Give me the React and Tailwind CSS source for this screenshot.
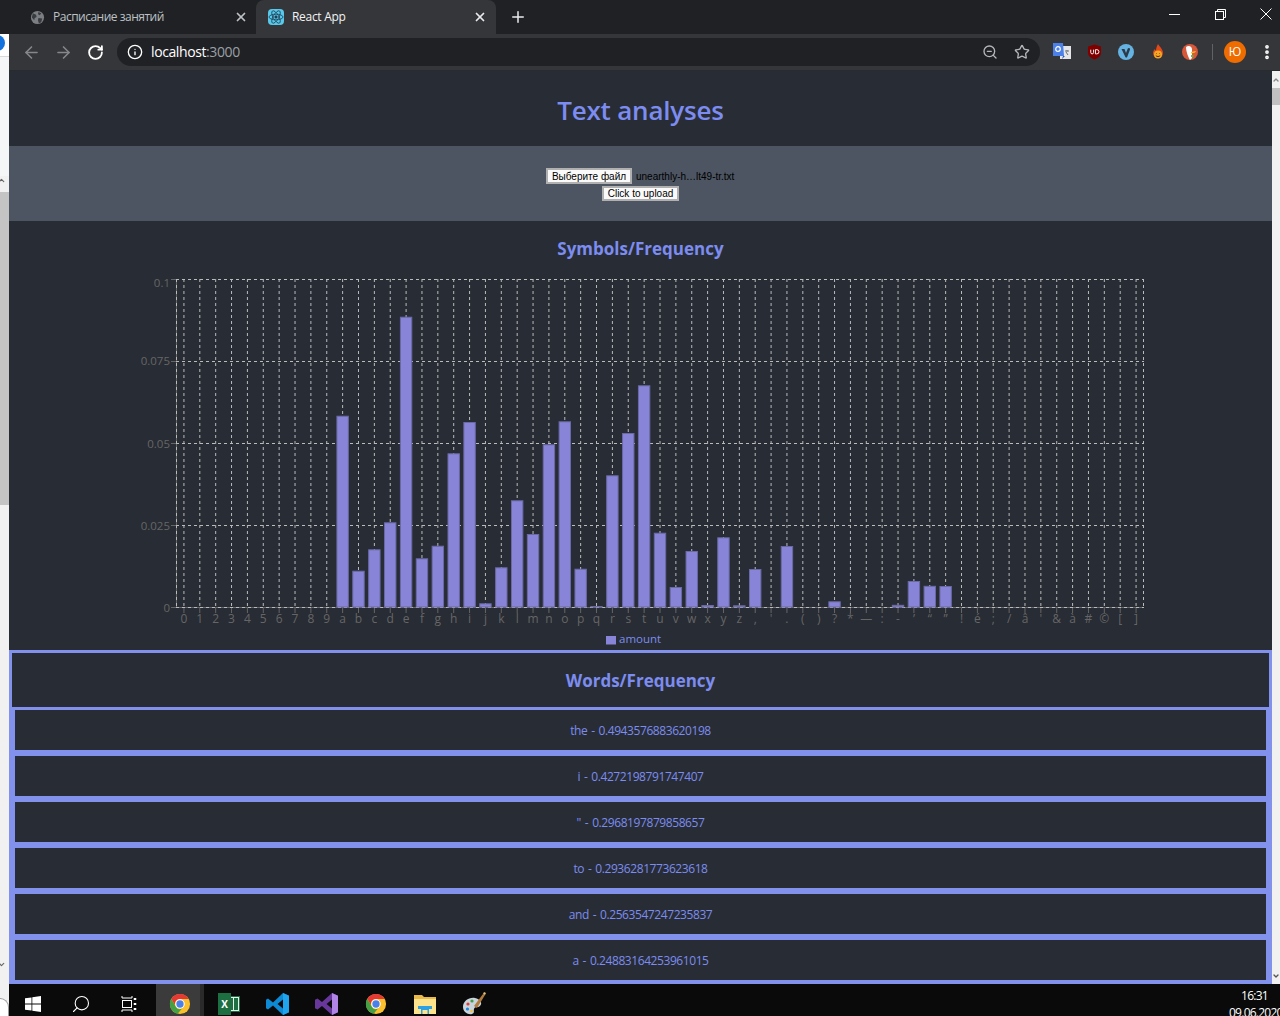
import React from "react";
import { ArrowLeft, ArrowRight, RotateCw, Info, ZoomOut, Star, X, Plus, EllipsisVertical, Search, ChevronUp, ChevronDown } from "lucide-react";

const ticks = ["0","1","2","3","4","5","6","7","8","9","a","b","c","d","e","f","g","h","i","j","k","l","m","n","o","p","q","r","s","t","u","v","w","x","y","z",",","'",".","(",")","?","*","—",":","-","’","“","”","!","é",";","/","â","'","&","à","#","©","[","]"];

// top edge of each bar, in page pixels
const barTops = {
  a: 415.7, b: 570.7, c: 549.3, d: 522.3, e: 316.7, f: 558.3, g: 545.7, h: 453.3, i: 422, j: 603.3,
  k: 567.3, l: 500.3, m: 534, n: 444.3, o: 421.3, p: 568.7, q: 606, r: 475.3, s: 433, t: 385.3,
  u: 532.7, v: 587, w: 551, x: 605, y: 537.3, z: 605.3, ",": 569, ".": 546, "?": 601.3, "—": 606.8,
  "-": 604.8, "’": 581, "“": 585.8, "”": 586,
};

const words = [
  "the - 0.4943576883620198",
  "i - 0.4272198791747407",
  "\" - 0.2968197879858657",
  "to - 0.2936281773623618",
  "and - 0.2563547247235837",
  "a - 0.24883164253961015",
];

const STEP = 968 / 61;
const tickX = (i) => 176 + (i + 0.5) * STEP;

const ChromeIcon = () => (
  <svg viewBox="0 0 24 24" className="w-[22px] h-[22px]">
    <circle cx="12" cy="12" r="11" fill="#fbc02d" />
    <path d="M2.5 6.4A11 11 0 0 1 21.5 6.5H12A5.5 5.5 0 0 0 7 14.5Z" fill="#e53935" />
    <path d="M2.5 6.4L7.2 14.6A5.5 5.5 0 0 0 14 17.1L9.4 22.7A11 11 0 0 1 2.5 6.4Z" fill="#43a047" />
    <circle cx="12" cy="12" r="5.2" fill="#fff" />
    <circle cx="12" cy="12" r="4" fill="#4a80e8" />
  </svg>
);

const TabBar = () => (
  <div className="h-[34px] shrink-0 bg-[#202124] flex items-start text-xs">
    <div className="w-[256px] h-full flex items-center pl-[30px] pr-[8px] text-[#bdc1c6]">
      <svg viewBox="0 0 16 16" className="w-[15px] h-[15px] shrink-0">
        <circle cx="8" cy="8" r="7" fill="#7b7e83" />
        <path d="M3 3.5L6.5 5 7 7.5 5 8.5 4.5 11 2 8ZM9 2l3 1.5-1.5 2-2-1ZM9 8.5l4 .5-1 4-2.5 1.5L8.5 11Z" fill="#3a3b3f" />
      </svg>
      <span className="ml-[8px] tracking-[-0.5px]">Расписание занятий</span>
      <X className="ml-auto w-[14px] h-[14px] text-[#bdc1c6]" strokeWidth={3} />
    </div>
    <div className="w-[240px] h-full bg-[#35363a] rounded-t-lg flex items-center pl-[12px] pr-[9px] text-[#f1f3f4]">
      <div className="w-[16px] h-[16px] bg-[#58c9ea] rounded-sm shrink-0 flex items-center justify-center">
        <svg viewBox="0 0 16 16" className="w-[16px] h-[16px]" fill="none" stroke="#1f3f55" strokeWidth="0.8">
          <ellipse cx="8" cy="8" rx="7" ry="2.8" />
          <ellipse cx="8" cy="8" rx="7" ry="2.8" transform="rotate(60 8 8)" />
          <ellipse cx="8" cy="8" rx="7" ry="2.8" transform="rotate(120 8 8)" />
          <circle cx="8" cy="8" r="1.2" fill="#1f3f55" />
        </svg>
      </div>
      <span className="ml-[8px] tracking-[-0.3px]">React App</span>
      <X className="ml-auto w-[14px] h-[14px] text-[#e8eaed]" strokeWidth={3} />
    </div>
    <div className="w-[44px] h-full flex items-center justify-center">
      <Plus className="w-[18px] h-[18px] text-[#e8eaed]" strokeWidth={2} />
    </div>
    <div className="ml-auto h-[28px] flex items-center text-white">
      <div className="w-[46px] flex justify-center">
        <div className="w-[11px] h-px bg-white" />
      </div>
      <div className="w-[46px] flex justify-center">
        <svg viewBox="0 0 11 11" className="w-[11px] h-[11px]" fill="none" stroke="#fff">
          <rect x="0.5" y="2.5" width="8" height="8" />
          <path d="M2.5 2.5V.5h8v8h-2" />
        </svg>
      </div>
      <div className="w-[37px] pl-[9px] flex justify-center">
        <svg viewBox="0 0 12 12" className="w-[12px] h-[12px]" stroke="#fff">
          <path d="M.5.5l11 11M11.5.5l-11 11" />
        </svg>
      </div>
    </div>
  </div>
);

const Slot = ({ children }) => <div className="w-[32px] h-[28px] flex items-center justify-center shrink-0">{children}</div>;

const Toolbar = () => (
  <div className="h-[37px] shrink-0 bg-[#35363a] border-b border-[#2a2b2e] flex items-start pt-[4px] pl-[6px]">
    <Slot><ArrowLeft className="w-[19px] h-[19px] text-[#85878b]" strokeWidth={2} /></Slot>
    <Slot><ArrowRight className="w-[19px] h-[19px] text-[#85878b]" strokeWidth={2} /></Slot>
    <Slot><RotateCw className="w-[17px] h-[17px] text-white" strokeWidth={2.6} /></Slot>
    <div className="ml-[6px] w-[923px] h-[28px] rounded-full bg-[#202124] flex items-center pl-[10px] pr-[2px]">
      <Info className="w-[16px] h-[16px] text-white shrink-0" strokeWidth={2} />
      <span className="ml-[8px] text-sm tracking-[-0.4px] text-white">localhost<span className="text-[#9aa0a6]">:3000</span></span>
      <div className="ml-auto flex">
        <Slot><ZoomOut className="w-[16px] h-[16px] text-[#b4b7ba]" strokeWidth={2} /></Slot>
        <Slot><Star className="w-[16px] h-[16px] text-[#b4b7ba]" strokeWidth={2} /></Slot>
      </div>
    </div>
    <div className="ml-[6px] flex items-center">
      <Slot>
        <svg viewBox="0 0 18 18" className="w-[18px] h-[18px]">
          <rect x="7" y="3" width="11" height="13" fill="#e3e5e8" />
          <path d="M0 0h10l1 13H0Z" fill="#4a80e8" />
          <path d="M10 13l-1 3 3-3Z" fill="#2b57a8" />
          <circle cx="5" cy="6" r="2.3" fill="none" stroke="#fff" strokeWidth="1.2" />
          <path d="M12 8h4M14 7v1.5M13 9l2 3" stroke="#6b6e72" fill="none" />
        </svg>
      </Slot>
      <Slot>
        <svg viewBox="0 0 16 16" className="w-[15px] h-[16px]">
          <path d="M8 0l7 2v7c0 3-3 5.500-7 7-4-1.500-7-4-7-7V2Z" fill="#800000" />
          <path d="M4 5.500v3a1.500 1.500 0 0 0 3 0v-3M9 5.500v4.500h1.500a2 2 0 0 0 0-4.500Z" fill="none" stroke="#fff" />
        </svg>
      </Slot>
      <Slot>
        <svg viewBox="0 0 16 16" className="w-[16px] h-[16px]">
          <circle cx="8" cy="8" r="8" fill="#65b3e3" />
          <path d="M3.500 5h3l1.500 4 1.800-4.500c.4-1 2.700-.5 2.200 1L9.200 13c-.4.800-1.500.800-1.800 0Z" fill="#2c3a48" />
        </svg>
      </Slot>
      <Slot>
        <svg viewBox="0 0 16 16" className="w-[16px] h-[16px]">
          <path d="M8 0c1 2 5 5 5 9a5 5 0 0 1-10 0c0-2 1-3 2-4 0 1 1 1.500 1 1.500C6 4 7 2 8 0Z" fill="#e2491a" />
          <circle cx="8" cy="10.500" r="4" fill="#f5a623" />
          <path d="M5.800 11.500c1 1.400 3.400 1.400 4.400 0M6.300 9.500h.5M9.200 9.500h.5" stroke="#5b2a08" fill="none" />
        </svg>
      </Slot>
      <Slot>
        <svg viewBox="0 0 16 16" className="w-[16px] h-[16px]">
          <circle cx="8" cy="8" r="8" fill="#d8583a" />
          <path d="M4 3c3-2 6-.5 6 2.500V14l-2 2c-2-3-4-9-4-13Z" fill="#fff" />
          <path d="M9 8l5-1-1 1.500-4 1Z" fill="#f5c518" />
          <path d="M9 11l3 .5-1 2-2-.5Z" fill="#5fb946" />
        </svg>
      </Slot>
      <div className="w-px h-[16px] bg-[#5f6368] ml-[6px]" />
      <div className="ml-[11px] w-[22px] h-[22px] rounded-full bg-[#ef6c00] text-white text-xs flex items-center justify-center">Ю</div>
      <EllipsisVertical className="ml-[12px] w-[18px] h-[18px] text-white" strokeWidth={3} />
    </div>
  </div>
);

const LeftStrip = () => (
  <div className="w-[9px] shrink-0 relative overflow-hidden bg-[#f1f1f1] flex flex-col">
    <div className="h-[23px] bg-white border-b border-[#d9d9d9] shrink-0" />
    <div className="absolute left-[-11px] top-[1px] w-[16px] h-[16px] rounded-full bg-[#1273de]" />
    <div className="h-[119px] shrink-0 bg-[#f5f6f7]" />
    <ChevronUp className="w-[9px] h-[9px] -ml-[3px] text-[#666] shrink-0" strokeWidth={3} />
    <div className="h-[7px] shrink-0" />
    <div className="h-[313px] shrink-0 bg-[#c4c4c4]" />
    <div className="h-[455px] shrink-0" />
    <ChevronDown className="w-[9px] h-[9px] -ml-[3px] text-[#666] shrink-0" strokeWidth={3} />
    <div className="h-[29px] shrink-0" />
    <div className="w-[9px] h-[18px] rounded-tr-full border-t border-r border-[#999] bg-white shrink-0" />
  </div>
);

const Chart = () => (
  <svg viewBox="109 262 1063 388" width="1063" height="388" className="block mx-auto" style={{ fontFamily: '"Open Sans", sans-serif' }}>
    <line x1="176" x2="1144" y1="607.5" y2="607.5" stroke="#666" />
    <line x1="176.5" x2="176.5" y1="279" y2="607" stroke="#666" />
    {[279.5, 361.5, 443.5, 525.5, 607.5].map((y) => (
      <line key={y} x1="176" x2="1144" y1={y} y2={y} stroke="#bbb" strokeDasharray="3 3" />
    ))}
    {[176.5, 1143.5].map((x) => (
      <line key={x} x1={x} x2={x} y1="279" y2="607" stroke="#bbb" strokeDasharray="3 3" />
    ))}
    {ticks.map((t, i) => (
      <line key={i} x1={tickX(i)} x2={tickX(i)} y1="279" y2="607" stroke="#bbb" strokeDasharray="3 3" />
    ))}
    {ticks.map((t, i) =>
      barTops[t] ? (
        <rect key={i} x={tickX(i) - 5.7} y={barTops[t] + 0.5} width="11.4" height={606.5 - barTops[t]} fill="#8884d8" stroke="#6a69a6" />
      ) : null
    )}
    {ticks.map((t, i) => (
      <g key={i}>
        <line x1={tickX(i)} x2={tickX(i)} y1="608" y2="613" stroke="#666" />
        <text x={tickX(i)} y="622.5" textAnchor="middle" fontSize="12" fill="#666">{t}</text>
      </g>
    ))}
    {[["0.1", 279.5, 287], ["0.075", 361.5, 365], ["0.05", 443.5, 447.500], ["0.025", 525.5, 529.500], ["0", 607.5, 611.500]].map(([label, y, base]) => (
      <g key={label}>
        <line x1="171" x2="176" y1={y} y2={y} stroke="#666" />
        <text x="170" y={base} textAnchor="end" fontSize="11.5" fill="#666">{label}</text>
      </g>
    ))}
    <rect x="606" y="636" width="10" height="8.500" fill="#8884d8" />
    <text x="619" y="643" fontSize="11.5" fill="#7b8cf0">amount</text>
  </svg>
);

const Page = () => (
  <div className="flex-1 min-w-0 overflow-hidden bg-[#282c34] text-[#7c8cf0] text-center" style={{ fontFamily: '"Open Sans", sans-serif' }}>
    {/* Header */}
    <div className="h-[75px] flex items-center justify-center pt-[4px]">
      <h1 className="text-[26px] font-semibold tracking-[-0.2px]">Text analyses</h1>
    </div>

    {/* Upload */}
    <div className="h-[75px] bg-[#4d5562] flex flex-col items-center pt-[22px] gap-[2px] text-black" style={{ fontFamily: '"Liberation Sans", sans-serif' }}>
      <div className="flex items-center text-[10px] mr-[1px]">
        <button className="w-[86px] h-[16px] pt-[1px] bg-[#fafafa] border-2 border-[#b0b0b0] text-[10px] leading-none text-black">Выберите файл</button>
        <span className="ml-[4px] w-[98px] text-left whitespace-nowrap">unearthly-h…lt49-tr.txt</span>
      </div>
      <button className="w-[77px] h-[15px] bg-[#fafafa] border-2 border-[#b0b0b0] text-[10px] leading-none text-black">Click to upload</button>
    </div>

    {/* Symbols */}
    <h2 className="h-[41px] pt-[14px] text-[17px] leading-[28px] font-bold">Symbols/Frequency</h2>
    <Chart />

    {/* Words */}
    <div className="border-[3px] border-[#8291ec]">
      <h2 className="h-[54px] flex items-center justify-center pt-[2px] text-[17px] font-bold">Words/Frequency</h2>
      {words.map((w) => (
        <div key={w} className="h-[46px] border-[3px] border-[#8291ec] flex items-center justify-center pt-[2px] text-xs tracking-[-0.42px] [word-spacing:1.2px]">{w}</div>
      ))}
    </div>
  </div>
);

const PageScrollbar = () => (
  <div className="w-[8px] shrink-0 bg-[#f1f1f1] flex flex-col items-center">
    <ChevronUp className="w-[8px] h-[8px] mt-[5px] text-[#888] shrink-0" strokeWidth={4} />
    <div className="w-[8px] h-[17px] mt-[4px] bg-[#c1c1c1] shrink-0" />
    <ChevronDown className="w-[8px] h-[8px] mt-auto mb-[4px] text-[#555] shrink-0" strokeWidth={4} />
  </div>
);

const TaskSlot = ({ children }) => (
  <div className="w-[48px] h-full pt-[8px] flex items-center justify-center shrink-0">{children}</div>
);

const Taskbar = () => (
  <div className="h-[32px] shrink-0 bg-[#0a0a0a] flex text-white overflow-hidden" style={{ fontFamily: '"Open Sans", sans-serif' }}>
    <TaskSlot>
      <svg viewBox="0 0 16 16" className="w-[16px] h-[16px]" fill="#fff">
        <path d="M0 2.300l6.500-.9v6.200H0ZM7.300 1.300L16 0v7.600H7.300ZM0 8.400h6.500v6.200L0 13.700ZM7.300 8.400H16V16l-8.700-1.300Z" />
      </svg>
    </TaskSlot>
    <TaskSlot><Search className="w-[20px] h-[20px] -scale-x-100 text-white" strokeWidth={1.3} /></TaskSlot>
    <TaskSlot>
      <svg viewBox="0 0 17 16" className="w-[17px] h-[16px]" fill="none" stroke="#fff">
        <path d="M1 0v2h10V0M1 16v-2h10v2" />
        <rect x="1.500" y="4.500" width="9" height="7" />
        <path d="M14 2v2M14 7v2M14 12v2" strokeWidth="2.500" />
      </svg>
    </TaskSlot>
    <div className="w-[3px] shrink-0" />
    <div className="w-[44px] h-full bg-[#3b3b3b] pt-[8px] pl-[4px] flex items-center justify-center shrink-0"><ChromeIcon /></div>
    <div className="w-[4px] h-full bg-[#2a2a2a] shrink-0" />
    <div className="w-[1px] shrink-0" />
    <TaskSlot>
      <div className="relative w-[22px] h-[22px]">
        <div className="absolute right-0 top-[3px] w-[14px] h-[16px] border border-[#1d6f42] bg-[#e8f3ec] grid grid-cols-2 gap-px p-px">
          <div className="bg-[#1d6f42]" /><div className="bg-[#1d6f42]" />
        </div>
        <div className="absolute left-0 top-0 w-[13px] h-[22px] bg-[#1d6f42] flex items-center justify-center text-[10px] font-bold text-white">X</div>
      </div>
    </TaskSlot>
    <div className="w-[1px] shrink-0" />
    <TaskSlot>
      <svg viewBox="0 0 24 24" className="w-[24px] h-[24px]">
        <path d="M17 1l6 2.800v16.400L17 23 7 13.500 2 17.500 0 16.300V7.700l2-1.200 5 4Zm0 6.500L11.500 12l5.500 4.500Z" fill="#0e8ad4" />
        <path d="M17 1l6 2.800v16.400L17 23Z" fill="#21a4ee" />
      </svg>
    </TaskSlot>
    <div className="w-[1px] shrink-0" />
    <TaskSlot>
      <svg viewBox="0 0 24 24" className="w-[24px] h-[24px]">
        <path d="M17 1l6 2.800v16.400L17 23 7 14 2.500 17.500 0 16.300V7.700l2.500-1.200L7 10Zm0 6.500L11.500 12 17 16.500Z" fill="#68379b" />
        <path d="M17 1l6 2.800v16.400L17 23Z" fill="#b184e8" />
      </svg>
    </TaskSlot>
    <div className="w-[1px] shrink-0" />
    <TaskSlot><ChromeIcon /></TaskSlot>
    <div className="w-[1px] shrink-0" />
    <TaskSlot>
      <svg viewBox="0 0 22 22" className="w-[22px] h-[22px]">
        <path d="M0 2h8l2 2h12v17H0Z" fill="#e9b949" />
        <path d="M0 6h22v15H0Z" fill="#fde48c" />
        <path d="M4 13h14v3h-3v5H7v-5H4Z" fill="#2aa0e6" />
        <rect x="8.500" y="17" width="5" height="4" fill="#fde48c" />
      </svg>
    </TaskSlot>
    <div className="w-[1px] shrink-0" />
    <TaskSlot>
      <svg viewBox="0 0 24 24" className="w-[24px] h-[24px]">
        <path d="M1 15c0-6 6-10 12-9 5 1 8 5 5 8-2 2-5 0-6 3-.6 2 1 4-2 5-4 1-9-2-9-7Z" fill="#c8d3dc" />
        <circle cx="6" cy="12" r="1.600" fill="#e53935" />
        <circle cx="10" cy="9" r="1.600" fill="#43a047" />
        <circle cx="5.500" cy="17" r="1.600" fill="#1e88e5" />
        <circle cx="9.500" cy="19" r="1.300" fill="#fbc02d" />
        <path d="M12 14L21 2l2 1-8 13Z" fill="#b07a3c" />
        <path d="M21 2l1-2 2 1-1 2Z" fill="#e8c27a" />
      </svg>
    </TaskSlot>
    <div className="ml-auto w-[51px] shrink-0 pt-[3px] text-xs leading-[17px] tracking-[-0.75px] whitespace-nowrap">
      <div className="text-center">16:31</div>
      <div>09.06.2020</div>
    </div>
  </div>
);

const App = () => (
  <div className="h-screen flex flex-col overflow-hidden bg-[#202124]">
    <div style={{ fontFamily: '"Open Sans", sans-serif' }}>
      <TabBar />
    </div>
    <div className="flex-1 min-h-0 flex">
      <LeftStrip />
      <div className="flex-1 min-w-0 flex flex-col">
        <div style={{ fontFamily: '"Open Sans", sans-serif' }}>
          <Toolbar />
        </div>
        <div className="flex-1 min-h-0 flex">
          <Page />
          <PageScrollbar />
        </div>
        <Taskbar />
      </div>
    </div>
  </div>
);

export default App;
